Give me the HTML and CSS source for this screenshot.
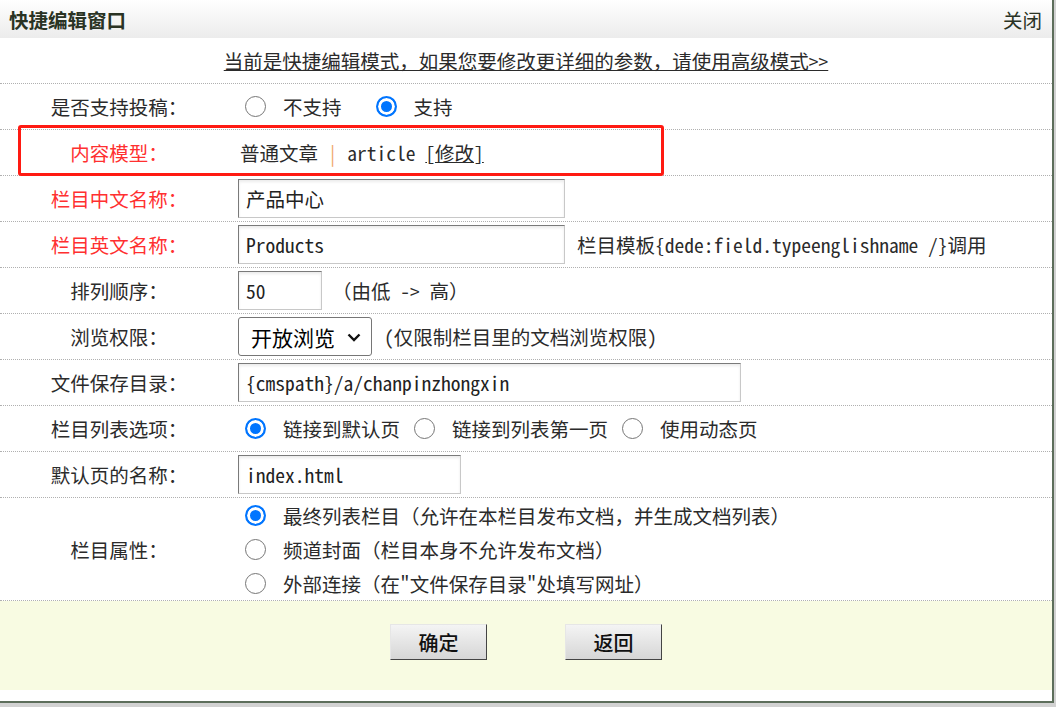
FILE: index.html
```html
<!DOCTYPE html>
<html lang="zh-CN">
<head>
    <meta charset="UTF-8">
    <meta name="viewport" content="width=device-width, initial-scale=1.0">
    <title>快捷编辑窗口</title>
    <link rel="stylesheet" href="styles.css">
</head>
<body>
    <div class="window">
        <div class="titlebar">
            <span class="title">快捷编辑窗口</span>
            <a class="close" href="#">关闭</a>
        </div>

        <form class="form">
            <div class="notice">
                <a href="#">当前是快捷编辑模式，如果您要修改更详细的参数，请使用高级模式&gt;&gt;</a>
            </div>

            <div class="row">
                <div class="label">是否支持投稿：</div>
                <div class="field">
                    <label class="opt far"><input type="radio" name="issend" value="0">不支持</label>
                    <label class="opt"><input type="radio" name="issend" value="1" checked>支持</label>
                </div>
            </div>

            <div class="row">
                <div class="label red">内容模型：</div>
                <div class="field">
                    <span class="model">普通文章 <span class="sep">|</span> article <a href="#" class="edit">[修改]</a></span>
                </div>
            </div>

            <div class="row">
                <div class="label red">栏目中文名称：</div>
                <div class="field">
                    <input type="text" class="text w-name" name="typename" value="产品中心">
                </div>
            </div>

            <div class="row">
                <div class="label red">栏目英文名称：</div>
                <div class="field">
                    <input type="text" class="text w-name" name="typenamedir" value="Products">
                    <span class="hint">栏目模板{dede:field.typeenglishname /}调用</span>
                </div>
            </div>

            <div class="row">
                <div class="label">排列顺序：</div>
                <div class="field">
                    <input type="text" class="text w-rank" name="sortrank" value="50">
                    <span class="hint rank">（由低 -&gt; 高）</span>
                </div>
            </div>

            <div class="row">
                <div class="label">浏览权限：</div>
                <div class="field">
                    <span class="select-wrap">
                        <select class="select" name="corank">
                            <option>开放浏览</option>
                            <option>注册会员</option>
                        </select>
                        <svg class="chevron" width="14" height="9" viewBox="0 0 14 9">
                            <path d="M1.5 1.5 L7 7 L12.5 1.5" fill="none" stroke="#111" stroke-width="2.4"/>
                        </svg>
                    </span>
                    <span class="hint tight">(仅限制栏目里的文档浏览权限)</span>
                </div>
            </div>

            <div class="row">
                <div class="label">文件保存目录：</div>
                <div class="field">
                    <input type="text" class="text w-dir" name="typedir" value="{cmspath}/a/chanpinzhongxin">
                </div>
            </div>

            <div class="row">
                <div class="label">栏目列表选项：</div>
                <div class="field">
                    <label class="opt"><input type="radio" name="isdefault" value="1" checked>链接到默认页</label>
                    <label class="opt"><input type="radio" name="isdefault" value="0">链接到列表第一页</label>
                    <label class="opt"><input type="radio" name="isdefault" value="-1">使用动态页</label>
                </div>
            </div>

            <div class="row">
                <div class="label">默认页的名称：</div>
                <div class="field">
                    <input type="text" class="text w-page" name="defaultname" value="index.html">
                </div>
            </div>

            <div class="row tall">
                <div class="label">栏目属性：</div>
                <div class="field stack">
                    <label class="opt"><input type="radio" name="ispart" value="0" checked>最终列表栏目（允许在本栏目发布文档，并生成文档列表）</label>
                    <label class="opt"><input type="radio" name="ispart" value="1">频道封面（栏目本身不允许发布文档）</label>
                    <label class="opt"><input type="radio" name="ispart" value="2">外部连接（在"文件保存目录"处填写网址）</label>
                </div>
            </div>

            <div class="actions">
                <button type="submit" class="btn">确定</button>
                <button type="button" class="btn">返回</button>
            </div>
        </form>

        <!-- highlight drawn over the model row -->
        <div class="mark"></div>
    </div>
</body>
</html>
```

FILE: styles.css
```css
body {
    margin: 0;
    padding: 0;
    background-color: #d2d2d2;
    font-family: "Noto Sans Mono CJK SC", "Noto Sans CJK SC", sans-serif;
    font-size: 19.5px;
    color: #2b2b2b;
}

.window {
    position: relative;
    width: 1052px;
    height: 701px;
    background-color: #fff;
    border-right: 2px solid #5d6e5b;
    border-bottom: 2px solid #5d6e5b;
}

.titlebar {
    display: flex;
    justify-content: space-between;
    align-items: center;
    height: 38px;
    padding: 0 10px 0 9px;
    background: linear-gradient(#ffffff, #ececec);
}

.title {
    font-weight: bold;
    color: #2a3324;
}

.close {
    color: #2a3324;
    text-decoration: none;
}

.notice {
    display: flex;
    justify-content: center;
    align-items: center;
    height: 45px;
    border-bottom: 1px dotted #b0b0b0;
}

.notice a {
    color: #2b2b2b;
}

.row {
    display: grid;
    grid-template-columns: 238px 1fr;
    align-items: center;
    height: 45px;
    border-bottom: 1px dotted #b0b0b0;
}

.row.tall {
    height: 102px;
}

.label {
    text-align: center;
    color: #2b2b2b;
}

.label.red {
    color: #ff3030;
}

.field {
    display: flex;
    align-items: center;
}

.field.stack {
    flex-direction: column;
    align-items: flex-start;
}

.stack .opt {
    height: 34px;
}

.model {
    white-space: pre;
    padding-left: 2px;
}

.sep {
    color: #f0a870;
}

.edit {
    color: #2b2b2b;
}

.opt {
    display: flex;
    align-items: center;
    margin-right: 7px;
}

.opt.far {
    margin-right: 27px;
}

.opt input {
    appearance: none;
    -webkit-appearance: none;
    box-sizing: border-box;
    width: 21px;
    height: 21px;
    margin: 0 17px 0 7px;
    border: 1px solid #767676;
    border-radius: 50%;
    background-color: #fff;
}

.opt input:checked {
    border: 2px solid #0075ff;
    background-color: #0075ff;
    box-shadow: inset 0 0 0 3px #fff;
}

.text {
    box-sizing: border-box;
    height: 39px;
    padding: 0 7px;
    border: 1px solid;
    border-color: #7a7a7a #c8c8c8 #c8c8c8 #7a7a7a;
    box-shadow: inset 0 2px 3px rgba(0, 0, 0, 0.08);
    font-family: inherit;
    font-size: 19.5px;
    color: #222;
}

.w-name { width: 327px; }
.w-rank { width: 84px; }
.w-dir  { width: 503px; }
.w-page { width: 223px; }

.hint {
    margin-left: 12px;
}

.hint.tight {
    margin-left: 12px;
}

.hint.rank {
    margin-left: 10px;
}

.select-wrap {
    position: relative;
    display: flex;
}

.select {
    appearance: none;
    -webkit-appearance: none;
    box-sizing: border-box;
    width: 134px;
    height: 39px;
    padding: 0 30px 0 12px;
    border: 1px solid #767676;
    border-radius: 3px;
    background-color: #fff;
    font-family: "Noto Sans CJK SC", sans-serif;
    font-size: 21px;
    color: #000;
}

.chevron {
    position: absolute;
    right: 11px;
    top: 16px;
    pointer-events: none;
}

.actions {
    display: flex;
    justify-content: center;
    gap: 78px;
    height: 89px;
    padding-top: 23px;
    box-sizing: border-box;
    background-color: #f8fbe2;
}

.btn {
    width: 97px;
    height: 36px;
    padding: 0;
    border: 1px solid;
    border-color: #e6e6e6 #444 #444 #e6e6e6;
    background: linear-gradient(#f4f4f4, #d6d6d6);
    font-family: "Noto Sans CJK SC", sans-serif;
    font-size: 20px;
    font-weight: 500;
    color: #111;
    cursor: pointer;
}

.mark {
    position: absolute;
    left: 18px;
    top: 125px;
    width: 640px;
    height: 45px;
    border: 3px solid #ff1a12;
    border-radius: 3px;
}
```
